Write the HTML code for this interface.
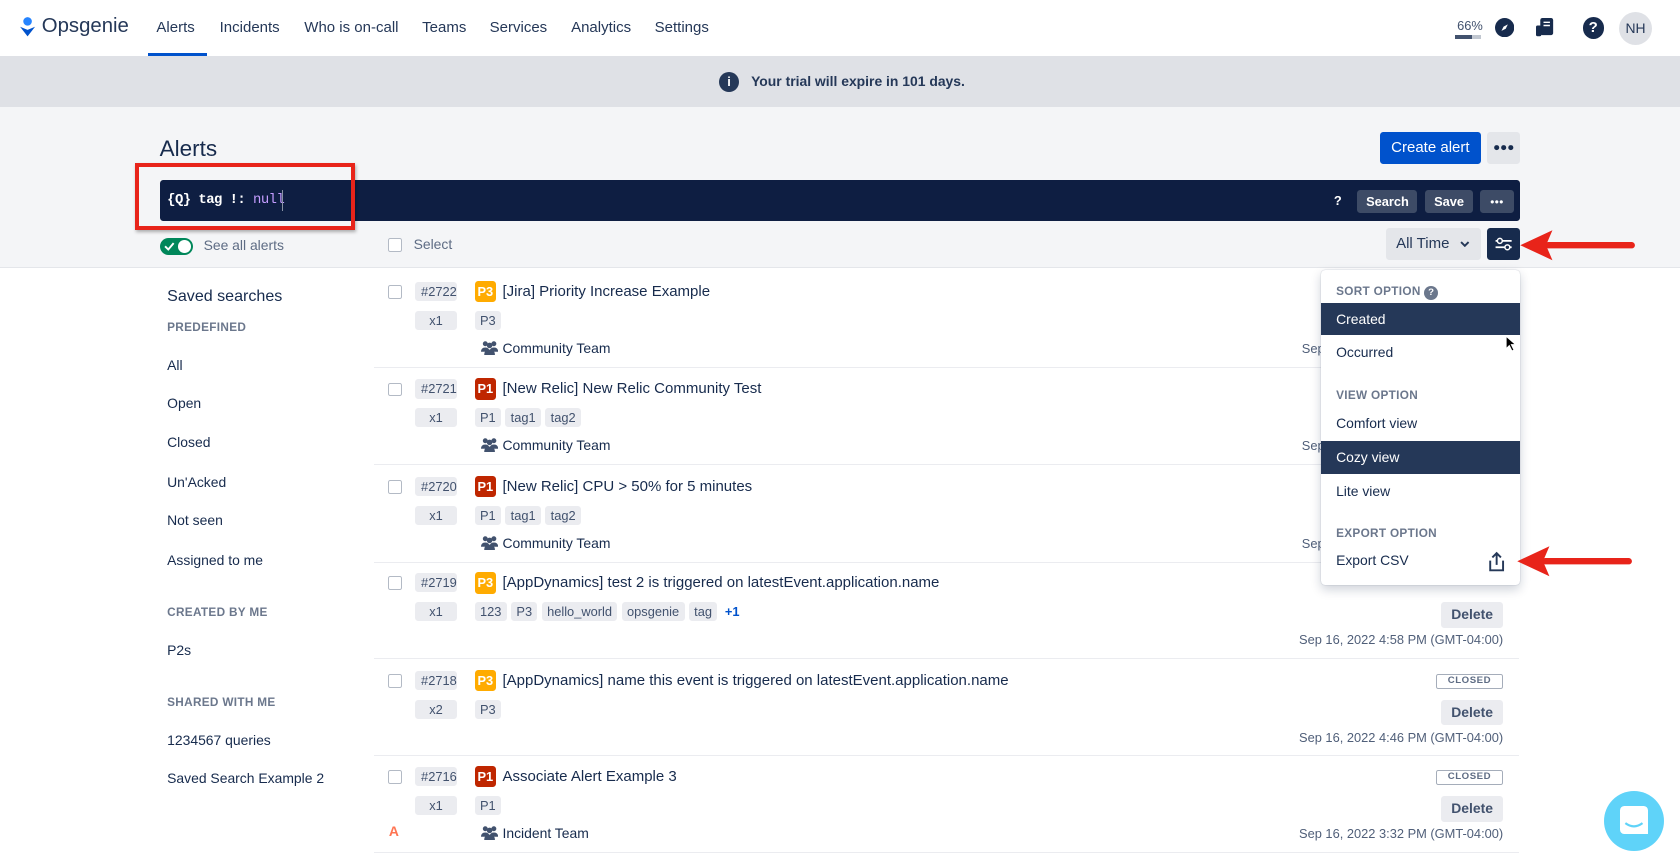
<!DOCTYPE html>
<html><head><meta charset="utf-8"><style>
*{box-sizing:border-box;margin:0;padding:0}
html,body{width:1680px;height:861px;overflow:hidden;background:#fff}
#z{zoom:1.071429;width:1568px;height:804px;position:relative;font-family:"Liberation Sans",Arial,sans-serif;color:#172b4d;font-size:14px;overflow:hidden;background:#fff}
.a{position:absolute}
.nav{top:0;left:0;width:1568px;height:52px;background:#fff;box-shadow:0 1px 2px rgba(9,30,66,.2)}
.nav span.l{position:absolute;top:18px;font-size:14px;color:#253858}
.banner{top:52px;left:0;width:1568px;height:48px;background:#dfe1e6}
.head{top:100px;left:0;width:1568px;height:150px;background:#f4f5f7;border-bottom:1px solid #e4e6ea}
.tag{position:absolute;height:18px;background:#ebecf0;border-radius:3px;font-size:12px;color:#42526e;line-height:18px;padding:0 6px;text-align:center}
.tags{position:absolute;left:94px;top:38px;display:flex;gap:4px;align-items:center}
.tags .tag{position:static;padding:0 5px}
.pr{position:absolute;width:20px;height:20px;border-radius:3px;color:#fff;font-weight:bold;font-size:12px;line-height:20px;text-align:center}
.cb{position:absolute;width:13px;height:13px;border:1.5px solid #b3bac5;border-radius:2px;background:#fff}
.row{position:absolute;left:349px;width:1069px;height:91px;border-bottom:1px solid #ebecf0}
.row .t{position:absolute;left:120px;top:12px;font-size:14px;color:#172b4d}
.row .team{position:absolute;left:100px;top:65px;font-size:13px;color:#172b4d}
.team svg{vertical-align:-2px;margin-right:4px}
.row .date{position:absolute;right:15px;top:66px;font-size:12px;color:#505f79}
.del{position:absolute;right:15px;top:38px;width:58px;height:24px;background:#ebecf0;border-radius:3px;font-size:13px;font-weight:bold;color:#42526e;text-align:center;line-height:24px}
.closed{position:absolute;right:15px;top:14px;width:63px;height:14px;border:1.5px solid #a5adba;border-radius:2px;font-size:9px;font-weight:bold;color:#5e6c84;text-align:center;line-height:11px;letter-spacing:.5px}
.side{position:absolute;left:156px;font-size:13px;color:#172b4d}
.sh{position:absolute;left:156px;font-size:11px;font-weight:bold;color:#6b778c;letter-spacing:.3px}
.menu{top:252px;left:1233px;width:186px;height:294px;background:#fff;border-radius:4px;box-shadow:0 4px 10px rgba(9,30,66,.2),0 0 1px rgba(9,30,66,.3)}
.menu .h{position:absolute;left:14px;font-size:11px;font-weight:bold;color:#6b778c;letter-spacing:.3px}
.menu .i{position:absolute;left:0;width:186px;height:30px;line-height:30px;padding-left:14px;font-size:13px;color:#172b4d}
.menu .s{background:#253858;color:#fff}
</style></head><body><div id="z">
<div class="a nav">
 <svg class="a" style="left:18px;top:15px" width="16" height="20" viewBox="0 0 16 20"><circle cx="8" cy="5" r="4" fill="#2684ff"/><path d="M1 10 L8 19 L15 10 L8 13 Z" fill="#0052cc"/></svg>
 <span class="a" style="left:39px;top:14px;font-size:19px;color:#253858">Opsgenie</span>
 <span class="l" style="left:146px">Alerts</span>
 <div class="a" style="left:138px;top:49px;width:55px;height:3px;background:#0052cc"></div>
 <span class="l" style="left:205px">Incidents</span>
 <span class="l" style="left:284px">Who is on-call</span>
 <span class="l" style="left:394px">Teams</span>
 <span class="l" style="left:457px">Services</span>
 <span class="l" style="left:533px">Analytics</span>
 <span class="l" style="left:611px">Settings</span>
 <span class="a" style="left:1360px;top:17px;font-size:12px;color:#42526e">66%</span>
 <div class="a" style="left:1358px;top:33px;width:24px;height:3px;background:#c1c7d0"><div style="width:16px;height:3px;background:#42526e"></div></div>
 <svg class="a" style="left:1395px;top:17px" width="18" height="18"><circle cx="9" cy="9" r="9" fill="#172b4d"/><path d="M6 12 L8 8 L12 6 L10 10 Z" fill="#fff"/></svg>
 <svg class="a" style="left:1434px;top:17px" width="16" height="18"><rect x="4" y="0" width="12" height="16" rx="2" fill="#172b4d"/><rect x="0" y="7" width="5" height="10" rx="1.5" fill="#172b4d"/><path d="M7 4h6M7 7h6" stroke="#fff" stroke-width="1.3"/></svg>
 <div class="a" style="left:1477px;top:16px;width:20px;height:20px;border-radius:50%;background:#172b4d;color:#fff;font-weight:bold;font-size:14px;text-align:center;line-height:20px">?</div>
 <div class="a" style="left:1511px;top:11px;width:31px;height:31px;border-radius:50%;background:#dfe1e6;font-size:13px;text-align:center;line-height:31px;color:#253858">NH</div>
</div>
<div class="a banner">
 <div class="a" style="left:671px;top:15px;width:19px;height:19px;border-radius:50%;background:#253858;color:#fff;font-weight:bold;font-size:12px;text-align:center;line-height:19px">i</div>
 <span class="a" style="left:701px;top:16px;font-size:13px;font-weight:bold;color:#253858">Your trial will expire in 101 days.</span>
</div>
<div class="a head">
 <span class="a" style="left:149px;top:27px;font-size:21px;color:#172b4d">Alerts</span>
 <div class="a" style="left:1288px;top:23px;width:94px;height:30px;background:#0052cc;border-radius:3px;color:#fff;font-size:14px;text-align:center;line-height:30px">Create alert</div>
 <div class="a" style="left:1388px;top:23px;width:31px;height:30px;background:#e4e6ea;border-radius:3px;color:#172b4d;font-weight:bold;text-align:center;line-height:30px;font-size:11px">●●●</div>
 <div class="a" style="left:149px;top:68px;width:1270px;height:38px;background:#0e1e42;border-radius:3px">
  <span class="a" style="left:7px;top:11px;font-family:'Liberation Mono',monospace;font-size:13px;color:#fff;font-weight:bold;letter-spacing:-.5px">{Q} tag !: <span style="color:#c49dff;font-weight:normal">null</span></span>
  <div class="a" style="left:114px;top:9px;width:1px;height:20px;background:#8993a4"></div>
  <span class="a" style="left:1096px;top:12px;color:#fff;font-weight:bold;font-size:12px">?</span>
  <div class="a" style="left:1118px;top:9px;width:56px;height:22px;background:#3d4b66;border-radius:3px;color:#fff;font-size:12px;font-weight:bold;text-align:center;line-height:22px">Search</div>
  <div class="a" style="left:1181px;top:9px;width:45px;height:22px;background:#3d4b66;border-radius:3px;color:#fff;font-size:12px;font-weight:bold;text-align:center;line-height:22px">Save</div>
  <div class="a" style="left:1232px;top:9px;width:32px;height:22px;background:#3d4b66;border-radius:3px;color:#fff;font-size:7px;text-align:center;line-height:22px">●●●</div>
 </div>
 <div class="a" style="left:126px;top:52px;width:205px;height:63px;border:4px solid #e8241a;box-shadow:1px 2px 3px rgba(0,0,0,.3)"></div>
 <div class="a" style="left:149px;top:122px;width:31px;height:16px;border-radius:8px;background:#00875a"><div class="a" style="left:17px;top:2px;width:12px;height:12px;border-radius:50%;background:#fff"></div><svg class="a" style="left:4px;top:4px" width="10" height="8"><path d="M1 4 L4 7 L9 1" fill="none" stroke="#fff" stroke-width="1.8"/></svg></div>
 <span class="a" style="left:190px;top:121px;font-size:13px;color:#5e6c84">See all alerts</span>
 <div class="cb" style="left:362px;top:122px"></div>
 <span class="a" style="left:386px;top:120px;font-size:13px;color:#5e6c84">Select</span>
 <div class="a" style="left:1294px;top:113px;width:88px;height:30px;background:#e4e6ea;border-radius:3px;font-size:14px;color:#253858;line-height:30px;padding-left:9px">All Time <svg style="margin-left:6px;vertical-align:1px" width="9" height="6"><path d="M1 1 L4.5 4.5 L8 1" fill="none" stroke="#253858" stroke-width="1.8"/></svg></div>
 <div class="a" style="left:1388px;top:113px;width:31px;height:30px;background:#172b4d;border-radius:3px">
  <svg width="31" height="30"><path d="M8 12h15M8 18h15" stroke="#fff" stroke-width="1.6"/><circle cx="12" cy="12" r="2.3" fill="#172b4d" stroke="#fff" stroke-width="1.4"/><circle cx="19" cy="18" r="2.3" fill="#172b4d" stroke="#fff" stroke-width="1.4"/></svg>
 </div>
 <svg class="a" style="left:1415px;top:112px" width="115" height="34"><path d="M108 17 L30 17" stroke="#e8241a" stroke-width="6" stroke-linecap="round"/><path d="M4 17 L34 3 L28 17 L34 31 Z" fill="#e8241a"/></svg>
</div>

<span class="a" style="left:156px;top:268px;font-size:15px;color:#172b4d">Saved searches</span>
<span class="sh" style="top:300px">PREDEFINED</span>
<span class="side" style="top:333px">All</span>
<span class="side" style="top:369px">Open</span>
<span class="side" style="top:405px">Closed</span>
<span class="side" style="top:442px">Un'Acked</span>
<span class="side" style="top:478px">Not seen</span>
<span class="side" style="top:515px">Assigned to me</span>
<span class="sh" style="top:566px">CREATED BY ME</span>
<span class="side" style="top:599px">P2s</span>
<span class="sh" style="top:650px">SHARED WITH ME</span>
<span class="side" style="top:683px">1234567 queries</span>
<span class="side" style="top:719px">Saved Search Example 2</span>

<svg width="0" height="0" style="position:absolute"><defs><g id="tm"><circle cx="4" cy="3.5" r="2.3" fill="#42526e"/><circle cx="12" cy="3.5" r="2.3" fill="#42526e"/><circle cx="8" cy="5" r="2.6" fill="#42526e"/><path d="M0 11q0-4 4-4q4 0 4 4zM8 11q0-4 4-4q4 0 4 4z" fill="#42526e"/><path d="M3 14q0-5 5-5q5 0 5 5z" fill="#42526e"/></g></defs></svg>

<div class="row" style="top:252px">
 <div class="cb" style="left:13px;top:14px"></div><div class="tag" style="left:38px;top:11px;width:40px">#2722</div><div class="tag" style="left:38px;top:38px;width:40px">x1</div>
 <div class="pr" style="left:94px;top:10px;background:#ffab00">P3</div><span class="t">[Jira] Priority Increase Example</span>
 <div class="tags"><span class="tag">P3</span></div>
 <span class="team"><svg width="16" height="14"><use href="#tm"/></svg>Community Team</span><span class="date" style="right:auto;left:866px">Sep</span>
</div>
<div class="row" style="top:343px">
 <div class="cb" style="left:13px;top:14px"></div><div class="tag" style="left:38px;top:11px;width:40px">#2721</div><div class="tag" style="left:38px;top:38px;width:40px">x1</div>
 <div class="pr" style="left:94px;top:10px;background:#bf2600">P1</div><span class="t">[New Relic] New Relic Community Test</span>
 <div class="tags"><span class="tag">P1</span><span class="tag">tag1</span><span class="tag">tag2</span></div>
 <span class="team"><svg width="16" height="14"><use href="#tm"/></svg>Community Team</span><span class="date" style="right:auto;left:866px">Sep</span>
</div>
<div class="row" style="top:434px">
 <div class="cb" style="left:13px;top:14px"></div><div class="tag" style="left:38px;top:11px;width:40px">#2720</div><div class="tag" style="left:38px;top:38px;width:40px">x1</div>
 <div class="pr" style="left:94px;top:10px;background:#bf2600">P1</div><span class="t">[New Relic] CPU &gt; 50% for 5 minutes</span>
 <div class="tags"><span class="tag">P1</span><span class="tag">tag1</span><span class="tag">tag2</span></div>
 <span class="team"><svg width="16" height="14"><use href="#tm"/></svg>Community Team</span><span class="date" style="right:auto;left:866px">Sep</span>
</div>
<div class="row" style="top:524px">
 <div class="cb" style="left:13px;top:14px"></div><div class="tag" style="left:38px;top:11px;width:40px">#2719</div><div class="tag" style="left:38px;top:38px;width:40px">x1</div>
 <div class="pr" style="left:94px;top:10px;background:#ffab00">P3</div><span class="t">[AppDynamics] test 2 is triggered on latestEvent.application.name</span>
 <div class="tags"><span class="tag">123</span><span class="tag">P3</span><span class="tag">hello_world</span><span class="tag">opsgenie</span><span class="tag">tag</span><span style="font-size:12px;color:#0052cc;font-weight:bold;margin-left:3px">+1</span></div>
 <div class="del">Delete</div><span class="date">Sep 16, 2022 4:58 PM (GMT-04:00)</span>
</div>
<div class="row" style="top:615px">
 <div class="cb" style="left:13px;top:14px"></div><div class="tag" style="left:38px;top:11px;width:40px">#2718</div><div class="tag" style="left:38px;top:38px;width:40px">x2</div>
 <div class="pr" style="left:94px;top:10px;background:#ffab00">P3</div><span class="t">[AppDynamics] name this event is triggered on latestEvent.application.name</span>
 <div class="tags"><span class="tag">P3</span></div>
 <div class="closed">CLOSED</div><div class="del">Delete</div><span class="date">Sep 16, 2022 4:46 PM (GMT-04:00)</span>
</div>
<div class="row" style="top:705px">
 <div class="cb" style="left:13px;top:14px"></div><div class="tag" style="left:38px;top:11px;width:40px">#2716</div><div class="tag" style="left:38px;top:38px;width:40px">x1</div>
 <div class="pr" style="left:94px;top:10px;background:#bf2600">P1</div><span class="t">Associate Alert Example 3</span>
 <div class="tags"><span class="tag">P1</span></div>
 <span class="a" style="left:14px;top:63px;color:#ff7452;font-weight:bold;font-size:13px">A</span>
 <span class="team"><svg width="16" height="14"><use href="#tm"/></svg>Incident Team</span>
 <div class="closed">CLOSED</div><div class="del">Delete</div><span class="date">Sep 16, 2022 3:32 PM (GMT-04:00)</span>
</div>

<div class="a menu">
 <span class="h" style="top:14px">SORT OPTION <span style="display:inline-block;width:13px;height:13px;border-radius:50%;background:#6b778c;color:#fff;font-size:9px;text-align:center;line-height:13px">?</span></span>
 <div class="i s" style="top:31px">Created</div>
 <div class="i" style="top:62px">Occurred</div>
 <span class="h" style="top:111px">VIEW OPTION</span>
 <div class="i" style="top:128px">Comfort view</div>
 <div class="i s" style="top:160px">Cozy view</div>
 <div class="i" style="top:191px">Lite view</div>
 <span class="h" style="top:240px">EXPORT OPTION</span>
 <div class="i" style="top:256px">Export CSV</div>
 <svg class="a" style="left:155px;top:262px" width="18" height="20"><path d="M9 2v11M5 6l4-4 4 4M3 9v9h12V9" fill="none" stroke="#253858" stroke-width="1.8"/></svg>
</div>
<svg class="a" style="left:1405px;top:313px" width="12" height="17"><path d="M1 1 L1 13 L4 10 L6.5 15 L8.5 14 L6 9 L10 9 Z" fill="#000" stroke="#fff" stroke-width="1"/></svg>
<svg class="a" style="left:1412px;top:507px" width="115" height="34"><path d="M108 17 L30 17" stroke="#e8241a" stroke-width="6" stroke-linecap="round"/><path d="M4 17 L34 3 L28 17 L34 31 Z" fill="#e8241a"/></svg>

<div class="a" style="left:1497px;top:738px;width:56px;height:56px;border-radius:50%;background:#5fd3f9">
 <div class="a" style="left:15px;top:14px;width:26px;height:26px;background:#fff;border-radius:4px 4px 0 4px"></div>
 <svg class="a" style="left:15px;top:14px" width="26" height="26"><path d="M5 16q8 6 16 0" fill="none" stroke="#5fd3f9" stroke-width="2"/></svg>
</div>
</div></body></html>
